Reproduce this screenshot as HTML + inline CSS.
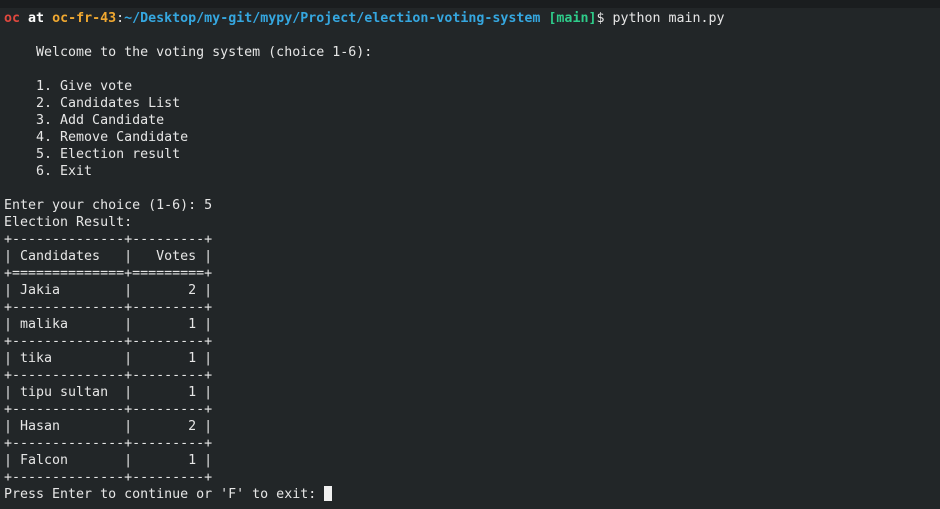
<!DOCTYPE html>
<html><head><meta charset="utf-8"><style>
html,body{margin:0;padding:0;width:940px;height:509px;background:#222628;overflow:hidden}
.top{position:absolute;left:0;top:0;width:940px;height:8px;background:#1a1d1f}
pre{position:absolute;left:4px;top:10px;margin:0;font-family:"DejaVu Sans Mono","Liberation Mono",monospace;font-size:13.3px;line-height:17px;color:#e6e6e6;letter-spacing:0}
.r{color:#e0483e;font-weight:bold}.w{color:#fff;font-weight:bold}.y{color:#f0a830;font-weight:bold}.b{color:#35a7e0;font-weight:bold}.g{color:#2ecc8a;font-weight:bold}
.cur{display:inline-block;width:8px;height:15px;background:#f0f0f0;vertical-align:-3px}
</style></head><body><div class="top"></div><pre><span class="r">oc</span> <span class="w">at</span> <span class="y">oc-fr-43</span>:<span class="b">~/Desktop/my-git/mypy/Project/election-voting-system</span> <span class="g">[main]</span>$ python main.py

    Welcome to the voting system (choice 1-6):

    1. Give vote
    2. Candidates List
    3. Add Candidate
    4. Remove Candidate
    5. Election result
    6. Exit

Enter your choice (1-6): 5
Election Result:
+--------------+---------+
| Candidates   |   Votes |
+==============+=========+
| Jakia        |       2 |
+--------------+---------+
| malika       |       1 |
+--------------+---------+
| tika         |       1 |
+--------------+---------+
| tipu sultan  |       1 |
+--------------+---------+
| Hasan        |       2 |
+--------------+---------+
| Falcon       |       1 |
+--------------+---------+
Press Enter to continue or 'F' to exit: <span class="cur"></span></pre></body></html>
